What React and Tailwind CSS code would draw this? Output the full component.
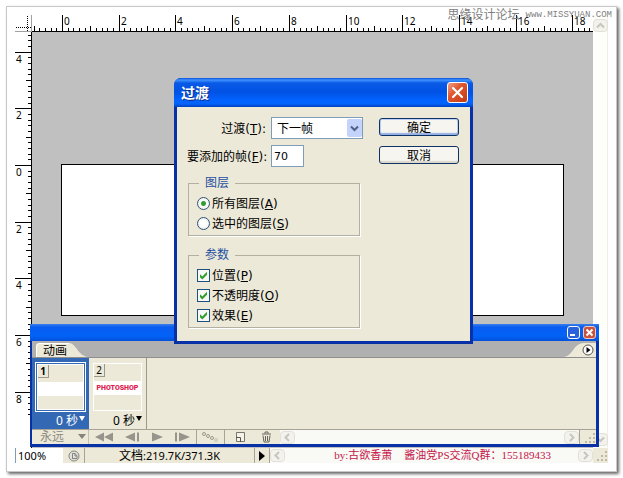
import React, { useLayoutEffect, useRef, useState } from "react";

const UNIT = 28.35;
const ORIGIN_X = 30;

function tickLength(i) {
  if (i % 10 === 0) return 17;
  if (i % 5 === 0) return 6;
  return 4;
}

function HorizontalRuler() {
  const ref = useRef(null);
  const [width, setWidth] = useState(0);
  useLayoutEffect(() => {
    const measure = () => setWidth(ref.current.getBoundingClientRect().width);
    measure();
    window.addEventListener("resize", measure);
    return () => window.removeEventListener("resize", measure);
  }, []);
  const last = Math.floor(((width - 3 - ORIGIN_X) * 5) / UNIT);
  const ticks = Array.from({ length: Math.max(0, last + 6) }, (_, k) => k - 5);
  return (
    <svg ref={ref} className="h-[17px] min-w-0 flex-1 overflow-hidden" shapeRendering="crispEdges">
      <rect x="0" y="16" width="100%" height="1" fill="#000" />
      {ticks.map((i) => {
        const x = Math.round(ORIGIN_X + (i * UNIT) / 5);
        const len = tickLength(i);
        return (
          <g key={i}>
            <rect x={x} y={17 - len} width="1" height={len} fill="#000" />
            {i % 10 === 0 && (
              <text x={x + 2} y="10" fontSize="10" fill="#000">{i / 5}</text>
            )}
          </g>
        );
      })}
    </svg>
  );
}

function VerticalRuler() {
  const ticks = Array.from({ length: 68 }, (_, k) => k - 23);
  return (
    <svg className="w-[17px] shrink-0 self-stretch overflow-hidden" shapeRendering="crispEdges">
      <rect x="16" y="0" width="1" height="100%" fill="#000" />
      {ticks.map((i) => {
        const y = Math.round(133 + (i * UNIT) / 5);
        const len = tickLength(i);
        return (
          <g key={i}>
            <rect x={17 - len} y={y} width={len} height="1" fill="#000" />
            {i % 10 === 0 && (
              <text x="1" y={y + 11} fontSize="10" fill="#000">{Math.abs(i) / 5}</text>
            )}
          </g>
        );
      })}
    </svg>
  );
}

function Chevron({ d, color = "#c6c6be" }) {
  return (
    <svg width="9" height="9" viewBox="0 0 9 9" fill="none" stroke={color} strokeWidth="2">
      <path d={d} />
    </svg>
  );
}

const UP = "M1 6.5 4.5 3 8 6.5";
const DOWN = "M1 2.5 4.5 6 8 2.5";
const LEFT = "M6 1 2.5 4.5 6 8";
const RIGHT = "M3 1 6.5 4.5 3 8";

function ScrollButton({ label, d }) {
  return (
    <button
      aria-label={label}
      className="flex h-[13px] w-[15px] shrink-0 items-center justify-center rounded-sm border border-[#e2e1d8] bg-[#f3f2ec]"
    >
      <Chevron d={d} />
    </button>
  );
}

function Grip() {
  return (
    <svg width="12" height="12" viewBox="0 0 12 12" className="shrink-0" fill="#bdb9a6" shapeRendering="crispEdges">
      <rect x="9" y="1" width="2" height="2" />
      <rect x="5" y="5" width="2" height="2" />
      <rect x="9" y="5" width="2" height="2" />
      <rect x="1" y="9" width="2" height="2" />
      <rect x="5" y="9" width="2" height="2" />
      <rect x="9" y="9" width="2" height="2" />
    </svg>
  );
}

function Key({ children }) {
  return (
    <>
      (<span className="underline underline-offset-1">{children}</span>)
    </>
  );
}

function RadioRow({ id, text, hotkey, defaultChecked }) {
  return (
    <div className="flex h-5 items-center gap-[2px]">
      <input
        id={id}
        type="radio"
        name="layers"
        defaultChecked={defaultChecked}
        className="h-[13px] w-[13px] appearance-none rounded-full border border-[#2f5478] bg-[radial-gradient(circle,#ffffff_40%,#dcdcd6)] checked:bg-[radial-gradient(circle,#2fa02f_0_2px,#ffffff_3px,#e4e4de)]"
      />
      <label htmlFor={id} className="pt-px">{text}<Key>{hotkey}</Key></label>
    </div>
  );
}

function CheckRow({ id, text, hotkey }) {
  return (
    <div className="flex h-5 items-center gap-[2px]">
      <span className="grid h-[13px] w-[13px]">
        <input
          id={id}
          type="checkbox"
          defaultChecked
          className="peer col-start-1 row-start-1 h-[13px] w-[13px] appearance-none border border-[#1c5180] bg-[#f7f7f4]"
        />
        <svg
          viewBox="0 0 13 13"
          className="pointer-events-none invisible col-start-1 row-start-1 h-[13px] w-[13px] peer-checked:visible"
          fill="#2f9e2f"
        >
          <path d="M3 5.2 5.3 7.4 10 2.8V5.8L5.3 10.4 3 8.2Z" />
        </svg>
      </span>
      <label htmlFor={id} className="pt-px">{text}<Key>{hotkey}</Key></label>
    </div>
  );
}

function Group({ title, children }) {
  return (
    <fieldset className="ml-px w-[172px] border border-[#b3b0a2] px-2 pt-1 pb-[2px] shadow-[1px_1px_0_#ffffff]">
      <legend className="ml-[2px] h-3 px-[6px] leading-3 text-[#1f50a0]">{title}</legend>
      {children}
    </fieldset>
  );
}

function TransitionDialog() {
  return (
    <section
      role="dialog"
      aria-labelledby="dialog-title"
      className="absolute top-[63px] left-[159px] z-20 w-[299px] overflow-hidden rounded-t-[7px] bg-[#0831a8] font-['DejaVu_Sans','Noto_Sans_CJK_SC',sans-serif] text-xs"
    >
      <header className="flex h-[29px] items-center justify-between bg-[linear-gradient(#0a4fd8_0,#3f93ff_2px,#0a5ae6_5px,#0152e4_14px,#0263ff_22px,#0262fb_26px,#0140b8)] pr-[5px] pl-[7px]">
        <h1 id="dialog-title" className="text-sm font-bold text-white [text-shadow:1px_1px_0_#0a2a80]">过渡</h1>
        <button
          aria-label="关闭"
          className="flex h-[21px] w-[21px] items-center justify-center rounded-[3px] border border-white bg-[linear-gradient(135deg,#f0a088,#e0562f_40%,#c23a14)]"
        >
          <svg width="13" height="13" viewBox="0 0 13 13" stroke="#fff" strokeWidth="2.2" strokeLinecap="round">
            <path d="M2 2 11 11M11 2 2 11" />
          </svg>
        </button>
      </header>
      <div className="mx-[3px] mb-[3px] flex justify-between bg-[#ece9d8] pt-[10px] pr-[11px] pb-[13px] pl-[10px]">
        <div>
          <div className="grid grid-cols-[79px_92px] items-center gap-x-[5px] gap-y-[6px]">
            <label htmlFor="tween" className="pt-px text-right whitespace-nowrap">过渡<Key>T</Key>:</label>
            <div className="grid h-[22px] w-[92px]">
              <select
                id="tween"
                className="col-start-1 row-start-1 h-[22px] appearance-none border border-[#7f9db9] bg-white pt-px pl-[5px]"
              >
                <option>下一帧</option>
              </select>
              <span className="pointer-events-none col-start-1 row-start-1 mr-px flex h-[18px] w-[15px] items-center justify-center self-center justify-self-end rounded-[2px] bg-[#c3d3fb]">
                <Chevron d={DOWN} color="#4d6185" />
              </span>
            </div>
            <label htmlFor="frames" className="pt-px text-right whitespace-nowrap">要添加的帧<Key>F</Key>:</label>
            <input
              id="frames"
              type="text"
              defaultValue="70"
              className="h-[22px] w-[33px] border border-[#7f9db9] bg-white px-[2px] text-[11px]"
            />
          </div>
          <div className="mt-[10px] flex flex-col gap-[13px]">
            <Group title="图层">
              <RadioRow id="all-layers" text="所有图层" hotkey="A" defaultChecked />
              <RadioRow id="selected-layers" text="选中的图层" hotkey="S" />
            </Group>
            <Group title="参数">
              <CheckRow id="position" text="位置" hotkey="P" />
              <CheckRow id="opacity" text="不透明度" hotkey="O" />
              <CheckRow id="effects" text="效果" hotkey="E" />
            </Group>
          </div>
        </div>
        <div className="flex flex-col gap-[10px] pt-px">
          <button className="h-[18px] w-20 rounded-[3px] border border-[#0e3465] bg-[#f6f5f0] pt-px leading-4 shadow-[inset_0_-2px_1px_#93b0e4,inset_0_0_0_1px_#bdd0f4]">确定</button>
          <button className="h-[18px] w-20 rounded-[3px] border border-[#0e3465] bg-[#f6f5f0] pt-px leading-4 shadow-[inset_0_-2px_1px_#dcd8cb]">取消</button>
        </div>
      </div>
    </section>
  );
}

function Frame({ number, selected, children }) {
  return (
    <button
      className={
        selected
          ? "flex w-[57px] flex-col items-center bg-[#3368b4] pt-1 text-white"
          : "flex w-[58px] flex-col items-center border-r border-[#9c998c] pt-1 text-black"
      }
    >
      <span
        className={
          selected
            ? "block h-[50px] w-[51px] border border-white p-px"
            : "block h-[50px] w-[51px] p-px"
        }
      >
        <span className="flex h-full flex-col border border-white bg-[#ece9d8] text-black">
          <span className={selected ? "h-[13px] w-[11px] border-r border-b border-[#9c998c] text-center text-[10px] leading-3 font-bold" : "h-[13px] w-[11px] border-r border-b border-[#9c998c] text-center text-[10px] leading-3"}>
            {number}
          </span>
          <span className="mt-1 flex h-[14px] w-full items-center justify-center bg-white">
            {children}
          </span>
        </span>
      </span>
      <span className="flex h-[17px] items-center gap-px self-end pr-1 text-xs">
        0 秒
        <svg width="6" height="5" viewBox="0 0 6 5" fill="currentColor" className="mb-1">
          <path d="M0 0H6L3 5Z" />
        </svg>
      </span>
    </button>
  );
}

function ToolButton({ label, width, children }) {
  return (
    <button aria-label={label} className="flex h-full shrink-0 items-center justify-center">
      <svg width={width} height="12" viewBox={`0 0 ${width} 12`} fill="#97958b">{children}</svg>
    </button>
  );
}

function AnimationPanel() {
  return (
    <section className="absolute top-[309px] right-[9px] left-[15px] z-10 flex flex-col bg-[#0831a8] text-xs">
      <header className="flex h-[17px] items-center justify-end gap-[3px] bg-[linear-gradient(#3a80e8_0,#0a5cf0_3px,#0263f8_12px,#0350d8)] pr-[3px]">
        <button aria-label="最小化" className="flex h-[13px] w-[13px] items-end rounded-[3px] border border-white bg-[#2a62dc] p-[2px]">
          <span className="h-[2px] w-[5px] bg-white" />
        </button>
        <button aria-label="关闭面板" className="flex h-[13px] w-[13px] items-center justify-center rounded-[3px] border border-[#f0c8c0] bg-[#c8533c]">
          <svg width="9" height="9" viewBox="0 0 9 9" stroke="#fff" strokeWidth="2">
            <path d="M1.5 1.5 7.5 7.5M7.5 1.5 1.5 7.5" />
          </svg>
        </button>
      </header>
      <div className="mr-[3px] mb-[3px] ml-[2px] bg-[#ece9d8]">
        <div className="flex h-[17px] items-end justify-between border-b border-[#8f8f8f] bg-[#b0b0b0]">
          <div className="grid h-[14px] w-[56px]">
            <svg viewBox="0 0 56 14" className="col-start-1 row-start-1 h-[14px] w-[56px]">
              <path d="M4 14V3Q4 0 8 0H37C44 0 46 13 56 14Z" fill="#ece9d8" />
              <path d="M4.500 14V3Q4.500 .5 8 .5H37" fill="none" stroke="#fff" />
            </svg>
            <h2 className="col-start-1 row-start-1 pl-[11px] leading-[15px]">动画</h2>
          </div>
          <button aria-label="面板菜单" className="h-[14px] w-[33px]">
            <svg viewBox="0 0 33 14" className="h-[14px] w-[33px]">
              <path d="M0 14C11 13 9 1 21 0H33V14Z" fill="#ece9d8" />
              <circle cx="25" cy="7" r="5" fill="#fff" stroke="#55534b" />
              <path d="M23.500 4 27.500 7 23.500 10Z" fill="#000" />
            </svg>
          </button>
        </div>
        <div className="flex h-[71px]">
          <Frame number="1" selected />
          <Frame number="2">
            <span className="font-['Roboto',sans-serif] text-[7px] leading-[14px] font-black text-[#e0204c]">PHOTOSHOP</span>
          </Frame>
        </div>
        <div className="flex h-[15px] items-center border-t border-[#a7a497]">
          <div className="grid h-full w-[57px] shrink-0 border-r border-[#c4c1b2]">
            <select aria-label="循环次数" className="col-start-1 row-start-1 appearance-none bg-transparent pl-2 leading-[14px] text-[#8d8b80]">
              <option>永远</option>
            </select>
            <svg width="8" height="6" viewBox="0 0 8 6" className="pointer-events-none col-start-1 row-start-1 mr-[2px] self-center justify-self-end" fill="#85837a">
              <path d="M0 0H8L4 5Z" />
            </svg>
          </div>
          <div className="flex h-full w-[108px] shrink-0 items-center justify-between border-r border-[#a7a497] px-[6px]">
            <ToolButton label="第一帧" width={18}><path d="M9 1.500V10.500L0 6ZM18 1.500V10.500L9 6Z" /></ToolButton>
            <ToolButton label="上一帧" width={15}><path d="M10 1.500V10.500L0 6ZM12 1.500H14V10.500H12Z" /></ToolButton>
            <ToolButton label="播放" width={11}><path d="M0 1.500 11 6 0 10.500Z" /></ToolButton>
            <ToolButton label="下一帧" width={15}><path d="M0 1.500H2V10.500H0ZM4 1.500 15 6 4 10.500Z" /></ToolButton>
          </div>
          <div className="flex h-full w-7 shrink-0 items-center justify-center border-r border-[#a7a497]">
            <ToolButton label="过渡帧" width={18}>
              <g fill="none" stroke="#9b998e">
                <circle cx="2" cy="3" r="1.5" />
                <circle cx="6" cy="5" r="1.5" />
                <circle cx="10" cy="7" r="1.5" />
                <circle cx="14" cy="9" r="1.5" stroke="#c4c1b2" />
              </g>
            </ToolButton>
          </div>
          <div className="flex h-full w-[55px] shrink-0 items-center justify-between pr-2 pl-[10px]">
            <ToolButton label="复制帧" width={11}>
              <path d="M1.500 1.500H9.500V10.500H1.500Z" fill="#f6f4ea" stroke="#77756c" />
              <path d="M1 6.500H5.500V11" fill="none" stroke="#55534b" />
            </ToolButton>
            <ToolButton label="删除帧" width={11}>
              <path d="M1 3H10M4 2.500V1H7V2.500M2 4.500 3 11H8L9 4.500M4.500 5V10M6.500 5V10" fill="none" stroke="#66645b" />
            </ToolButton>
          </div>
          <div className="flex h-full min-w-0 flex-1 items-center justify-between bg-[#f9f9f5]">
            <ScrollButton label="向左滚动" d={LEFT} />
            <ScrollButton label="向右滚动" d={RIGHT} />
          </div>
          <div className="flex h-full w-[17px] items-end justify-end border-l border-[#a7a497]"><Grip /></div>
        </div>
      </div>
    </section>
  );
}

function StatusBar() {
  return (
    <footer className="flex h-[15px] items-center bg-[#ece9d8] text-xs leading-[15px]">
      <input
        aria-label="缩放"
        type="text"
        defaultValue="100%"
        className="h-[15px] w-12 shrink-0 border-l border-[#7f9db9] bg-white pl-[2px] text-[11px] leading-[15px]"
      />
      <button aria-label="版本" className="flex h-full w-[22px] shrink-0 items-center justify-center border-r border-[#a7a497]">
        <svg width="12" height="12" viewBox="0 0 12 12" fill="none" stroke="#85857f">
          <circle cx="6" cy="6" r="5" fill="#e2e2dc" />
          <path d="M4.500 9V3.500H7L9 6V8.500H4.500M7 3.500V6H9" />
        </svg>
      </button>
      <div className="w-[170px] shrink-0 border-r border-[#a7a497] text-center whitespace-nowrap">
        文档<span className="text-[11px]">:219.7K/371.3K</span>
      </div>
      <button aria-label="状态菜单" className="flex h-full w-[15px] shrink-0 items-center justify-center border-r border-[#a7a497]">
        <svg width="6" height="10" viewBox="0 0 6 10"><path d="M0 0 6 5 0 10Z" /></svg>
      </button>
      <div className="flex h-full min-w-0 flex-1 items-center justify-between bg-[#f9f9f5]">
        <ScrollButton label="向左滚动画布" d={LEFT} />
        <p className="mr-[27px] ml-auto flex gap-3 font-['Liberation_Serif','Noto_Sans_CJK_SC',serif] text-[11px] whitespace-nowrap text-[#c4164a]">
          <span>by:古欲香萧</span>
          <span>酱油党PS交流Q群：155189433</span>
        </p>
        <ScrollButton label="向右滚动画布" d={RIGHT} />
      </div>
      <div className="flex w-[15px] shrink-0 justify-end"><Grip /></div>
    </footer>
  );
}

export default function App() {
  return (
    <div className="bg-white p-[6px] font-['Noto_Sans','Noto_Sans_CJK_SC',sans-serif] text-black">
      <main className="relative border border-[#c8c8c8] bg-white p-2 shadow-[2px_2px_3px_#666666]">
        <div className="relative">
          <div className="flex">
            <div className="min-w-0 flex-1">
              <div className="flex">
                <svg width="17" height="17" viewBox="0 0 17 17" className="shrink-0" shapeRendering="crispEdges">
                  <path d="M0 16.500H17M16.500 0V17" stroke="#a0a0a0" />
                  <path d="M1 12.500H17M12.500 1V17" stroke="#000" strokeDasharray="1 1" />
                </svg>
                <HorizontalRuler />
              </div>
              <div className="flex">
                <VerticalRuler />
                <div className="flex-1 bg-[#c0c0c0] px-[29px] pt-[132px] pb-[132px]">
                  <div className="h-[152px] border border-black bg-white" />
                </div>
              </div>
            </div>
            <div className="flex w-[15px] shrink-0 flex-col justify-between border-r border-[#f0efe6] bg-[#fdfdf9] pt-1 pb-[2px]">
              <ScrollButton label="向上滚动" d={UP} />
              <ScrollButton label="向下滚动" d={DOWN} />
            </div>
          </div>
          <StatusBar />
          <AnimationPanel />
          <TransitionDialog />
        </div>
        <p className="absolute top-0 right-1 z-30 flex items-center gap-[6px] text-xs leading-4 text-[#808080]">
          <span>思缘设计论坛</span>
          <span className="font-['Liberation_Mono',monospace] text-[9px]">www.MISSYUAN.COM</span>
        </p>
      </main>
    </div>
  );
}
